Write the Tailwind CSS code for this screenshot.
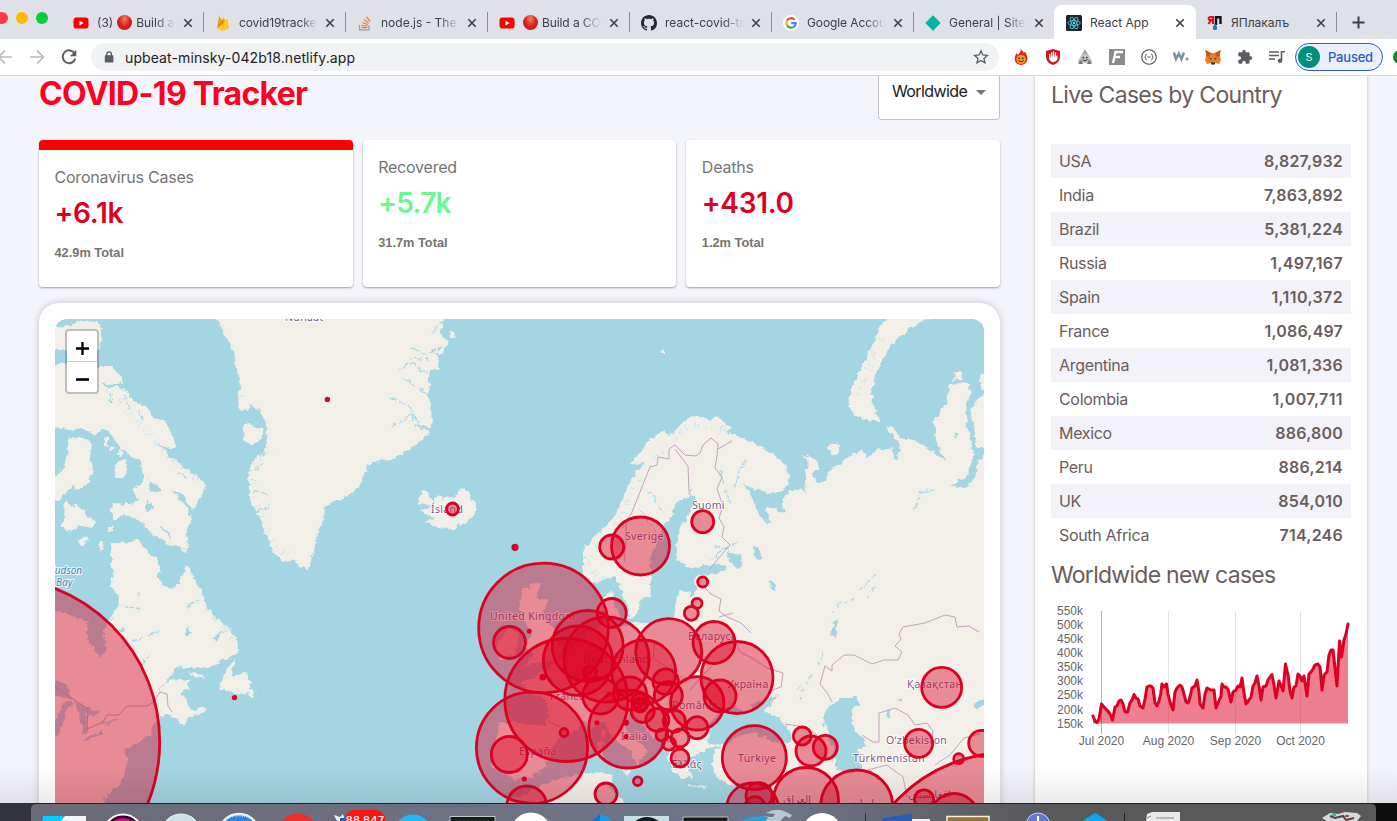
<!DOCTYPE html>
<html lang="en">
<head>
<meta charset="utf-8">
<title>React App</title>
<script src="https://cdn.jsdelivr.net/npm/@tailwindcss/browser@4"></script>
</head>
<body class="overflow-hidden">
<svg class="absolute size-0" aria-hidden="true">
  <defs>
    <symbol id="x" viewBox="0 0 10 10"><path d="M1.3 1.3l7.4 7.4M8.7 1.3L1.3 8.7" stroke="#3c4043" stroke-width="1.6" fill="none"/></symbol>
    <symbol id="yt" viewBox="0 0 16 16"><rect x=".5" y="2.6" width="15" height="11" rx="2.8" fill="#f00"/><path d="M6.5 5.8v4.6l4-2.3z" fill="#fff"/></symbol>
  </defs>
</svg>
<div class="flex h-[821px] w-[1397px] flex-col overflow-hidden bg-[#f4f5fa] font-['Inter',sans-serif]">

  <!-- Tab strip -->
  <div class="relative flex h-[39px] shrink-0 bg-[#dee1e8] text-[12px] tracking-[0px] text-[#3c4043]">
    <div class="flex w-[62px] shrink-0 gap-2 pt-3">
      <i class="-ml-1 size-3 rounded-full bg-[#ff3b4a]"></i><i class="size-3 rounded-full bg-[#ffb900]"></i><i class="size-3 rounded-full bg-[#00d13a]"></i>
    </div>
    <div class="relative flex w-[142px] items-center gap-2 pt-1.5 pr-[11px] pl-[11px]"><svg class="size-4 shrink-0"><use href="#yt"/></svg><div class="flex flex-1 items-center gap-1 overflow-hidden whitespace-nowrap [mask-image:linear-gradient(90deg,#000_75%,transparent)]"><span>(3)</span><i class="size-[15px] shrink-0 rounded-full bg-radial-[at_50%_25%] from-[#f08070] via-[#dc2018] to-[#b01010]"></i><span>Build a</span></div><svg class="size-2.5 shrink-0"><use href="#x"/></svg><i class="absolute top-3 right-0 h-5 w-px bg-[#8a8d91]"></i></div>
    <div class="relative flex w-[142px] items-center gap-2 pt-1.5 pr-[11px] pl-[11px]"><svg class="size-4 shrink-0" viewBox="0 0 16 16"><path d="M2 13L4.3.8 7 5.2 8.600 2.600 14 13l-5.800 3z" fill="#ffa000"/><path d="M2 13l10.500-9.500L14 13l-5.800 3z" fill="#ffca28"/><path d="M2 13L7 5l2 3z" fill="#f57c00"/></svg><div class="flex-1 overflow-hidden whitespace-nowrap tracking-[-0.1px] [mask-image:linear-gradient(90deg,#000_80%,transparent)]">covid19tracker</div><svg class="size-2.5 shrink-0"><use href="#x"/></svg><i class="absolute top-3 right-0 h-5 w-px bg-[#8a8d91]"></i></div>
    <div class="relative flex w-[142px] items-center gap-2 pt-1.5 pr-[11px] pl-[11px]"><svg class="size-4 shrink-0" viewBox="0 0 16 16" fill="none"><path d="M2.500 10v4.800h9.500V10" stroke="#9a9c9f" stroke-width="1.200"/><path d="M4.300 12.700h6M4.400 10.300l6 .8M5.200 7.500l5.600 2M7 4.500l4.700 3.700M9.600 1.800l3.500 4.900" stroke="#f48024" stroke-width="1.300"/></svg><div class="flex-1 overflow-hidden whitespace-nowrap [mask-image:linear-gradient(90deg,#000_75%,transparent)]">node.js - The</div><svg class="size-2.5 shrink-0"><use href="#x"/></svg><i class="absolute top-3 right-0 h-5 w-px bg-[#8a8d91]"></i></div>
    <div class="relative flex w-[142px] items-center gap-2 pt-1.5 pr-[11px] pl-[11px]"><svg class="size-4 shrink-0"><use href="#yt"/></svg><div class="flex flex-1 items-center gap-1 overflow-hidden whitespace-nowrap tracking-[-0.1px] [mask-image:linear-gradient(90deg,#000_75%,transparent)]"><i class="size-[15px] shrink-0 rounded-full bg-radial-[at_50%_25%] from-[#f08070] via-[#dc2018] to-[#b01010]"></i><span>Build a COVID</span></div><svg class="size-2.5 shrink-0"><use href="#x"/></svg><i class="absolute top-3 right-0 h-5 w-px bg-[#8a8d91]"></i></div>
    <div class="relative flex w-[142px] items-center gap-2 pt-1.5 pr-[11px] pl-[11px]"><svg class="size-4 shrink-0" viewBox="0 0 16 16"><path fill="#24292e" d="M8 0C3.580 0 0 3.580 0 8c0 3.540 2.290 6.530 5.470 7.590.4.070.55-.17.55-.38 0-.19-.01-.82-.01-1.490-2.010.37-2.530-.49-2.690-.94-.09-.23-.48-.94-.82-1.130-.28-.15-.68-.52-.01-.53.63-.01 1.080.58 1.230.82.72 1.210 1.870.87 2.330.66.07-.52.28-.87.51-1.070-1.780-.2-3.640-.89-3.640-3.950 0-.87.31-1.590.82-2.150-.08-.2-.36-1.020.08-2.120 0 0 .67-.21 2.200.82.64-.18 1.320-.27 2-.27s1.360.09 2 .27c1.530-1.040 2.200-.82 2.200-.82.44 1.100.16 1.920.08 2.120.51.56.82 1.270.82 2.150 0 3.070-1.870 3.750-3.650 3.950.29.25.54.73.54 1.480 0 1.070-.01 1.930-.01 2.200 0 .21.15.46.55.38A8.010 8.010 0 0 0 16 8c0-4.420-3.580-8-8-8z"/></svg><div class="flex-1 overflow-hidden whitespace-nowrap [mask-image:linear-gradient(90deg,#000_75%,transparent)]">react-covid-tra</div><svg class="size-2.5 shrink-0"><use href="#x"/></svg><i class="absolute top-3 right-0 h-5 w-px bg-[#8a8d91]"></i></div>
    <div class="relative flex w-[142px] items-center gap-2 pt-1.5 pr-[11px] pl-[11px]"><svg class="size-4 shrink-0" viewBox="0 0 16 16" fill="none"><circle cx="8" cy="8" r="8" fill="#fff"/><g stroke-width="2.200"><path d="M11.500 4.700A4.700 4.700 0 0 0 3.900 5.800" stroke="#ea4335"/><path d="M3.900 5.800a4.700 4.700 0 0 0 0 4.500" stroke="#fbbc05"/><path d="M3.900 10.300a4.700 4.700 0 0 0 7.200 1.200" stroke="#34a853"/><path d="M11.100 11.500a4.500 4.500 0 0 0 1.600-3.300H8.200" stroke="#4285f4"/></g></svg><div class="flex-1 overflow-hidden whitespace-nowrap tracking-[-0.1px] [mask-image:linear-gradient(90deg,#000_75%,transparent)]">Google Account</div><svg class="size-2.5 shrink-0"><use href="#x"/></svg><i class="absolute top-3 right-0 h-5 w-px bg-[#8a8d91]"></i></div>
    <div class="relative flex w-[140px] items-center gap-2 pt-1.5 pr-[10px] pl-[11px]"><svg class="size-4 shrink-0" viewBox="0 0 16 16"><path d="M8 .3L15.700 8 8 15.700.3 8z" fill="#00b5a3"/></svg><div class="flex-1 overflow-hidden whitespace-nowrap [mask-image:linear-gradient(90deg,#000_75%,transparent)]">General | Site s</div><svg class="size-2.5 shrink-0"><use href="#x"/></svg></div>
    <div class="relative flex w-[142px] items-center gap-2 rounded-t-lg bg-white pr-[11px] pl-[12px] pt-1.5 [clip-path:inset(5px_0_0_0_round_8px_8px_0_0)]"><svg class="size-4 shrink-0" viewBox="0 0 16 16" fill="none"><rect width="16" height="16" rx="1.500" fill="#20232a"/><g stroke="#4cc3de" stroke-width=".9"><ellipse cx="8" cy="8" rx="6.300" ry="2.400"/><ellipse cx="8" cy="8" rx="6.300" ry="2.400" transform="rotate(60 8 8)"/><ellipse cx="8" cy="8" rx="6.300" ry="2.400" transform="rotate(120 8 8)"/></g><circle cx="8" cy="8" r="1.200" fill="#61dafb"/></svg><div class="flex-1 whitespace-nowrap">React App</div><svg class="size-2.5 shrink-0"><use href="#x"/></svg></div>
    <div class="relative flex w-[141px] items-center gap-2 pt-1.5 pr-[11px] pl-[11px]"><svg class="size-4 shrink-0" viewBox="0 0 16 16" fill="none"><path d="M6 1v8M6 2H3.300a1.500 1.500 0 0 0 0 3.200H6M3.800 5.500L1.500 9" stroke="#e8101c" stroke-width="2.200"/><path d="M9 10V2.200h4.500V9" stroke="#15151a" stroke-width="2.400"/><path d="M8 8.500c1.500 2.300 2.200 3.200 2.200 4.400a2.200 2.200 0 0 1-4.400 0c0-1.200.8-2.200 2.200-4.400z" fill="#2277b5"/></svg><div class="flex-1 whitespace-nowrap">ЯПлакалъ</div><svg class="size-2.5 shrink-0"><use href="#x"/></svg><i class="absolute top-3 right-0 h-5 w-px bg-[#8a8d91]"></i></div>
    <svg class="mt-4 ml-[15px] size-[13px]" viewBox="0 0 13 13"><path d="M6.500.5v12M.5 6.500h12" stroke="#3c4043" stroke-width="2"/></svg>
  </div>

  <!-- Toolbar -->
  <div class="flex h-[37px] shrink-0 items-center border-b border-[#d5d7dd] bg-white">
    <div class="flex w-[91px] shrink-0 items-center">
      <svg class="-ml-[3px] h-4 w-[17px]" viewBox="0 0 17 16" fill="none" stroke="#b9bbbe" stroke-width="1.700"><path d="M15 8H2M8 1.500L1.500 8 8 14.500"/></svg>
      <svg class="ml-4 h-4 w-[15px]" viewBox="0 0 15 16" fill="none" stroke="#b9bbbe" stroke-width="1.700"><path d="M0 8h13M7 1.500L13.500 8 7 14.500"/></svg>
      <svg class="ml-4 size-4" viewBox="0 0 16 16" fill="none"><path d="M13.800 4.800A6.400 6.400 0 1 0 14.300 9.500" stroke="#5a5d61" stroke-width="2"/><path d="M15.300.8v6.400H8.900z" fill="#5a5d61"/></svg>
    </div>
    <div class="flex h-7 w-[908px] shrink-0 items-center rounded-full bg-[#f1f2f4] pr-[10px] pl-[13px]">
      <svg class="h-3 w-[10px]" viewBox="0 0 10 12"><rect x=".8" y="4.200" width="8.600" height="7.300" rx=".8" fill="#5a5d61"/><path d="M2.800 5V3.200a2.300 2.300 0 0 1 4.600 0V5" fill="none" stroke="#5a5d61" stroke-width="1.300"/></svg>
      <span class="ml-[11px] flex-1 text-[14px] tracking-[0.1px] text-[#202124]">upbeat-minsky-042b18.netlify.app</span>
      <svg class="size-4" viewBox="0 0 16 16"><path d="M8 1.800l1.800 4.200 4.600.4-3.500 3 1.100 4.500L8 11.500l-4 2.400 1.100-4.500-3.500-3L6.200 6z" fill="none" stroke="#5a5d61" stroke-width="1.300"/></svg>
    </div>
    <div class="ml-[14px] flex w-[273px] shrink-0 items-center gap-4">
      <svg class="size-4 shrink-0" viewBox="0 0 16 16"><path d="M8 0c1 2 2 2 3 4l1-1.500c1.500 3 2.800 5 2.300 8A6.200 6.200 0 0 1 8 16a6.200 6.200 0 0 1-6.300-5.500C1.500 8 2.700 6.500 3.200 4l1.600 2C6.500 4.500 7.500 2.500 8 0z" fill="#e8261c"/><circle cx="8" cy="10.500" r="4.600" fill="#f3a01f"/><circle cx="6.200" cy="9.300" r=".9" fill="#40200a"/><circle cx="9.800" cy="9.300" r=".9" fill="#40200a"/><path d="M5.300 11.500q2.700 2.800 5.400 0" stroke="#40200a" fill="none"/></svg>
      <svg class="size-4 shrink-0" viewBox="0 0 16 16"><path d="M8 0l7 2v6q-.5 6-7 8-6.500-2-7-8V2z" fill="#d9131c"/><path d="M4.800 5.500v4M6.700 9V3.600M8.600 8V3M10.500 8V3.800" stroke="#fff" stroke-width="1.300" stroke-linecap="round" fill="none"/><path d="M4.200 7.500h7l1.300-1.500v4q-1 3-4 3.300-3.500-.3-4.300-3.300z" fill="#fff"/></svg>
      <svg class="size-4 shrink-0" viewBox="0 0 16 16"><path d="M8 0l3.500 6L15.500 14l-3.500-1.500h-8L.5 14l4-8z" fill="#a5a5a5"/><circle cx="8" cy="9.500" r="4.800" fill="#c4c4c4"/><path d="M1 15l3.500-4 1.500 4zM15 15l-3.500-4-1.500 4z" fill="#777"/><circle cx="6.300" cy="8.600" r=".9" fill="#333"/><circle cx="9.700" cy="8.600" r=".9" fill="#333"/><path d="M5.500 10.700q2.500 2.400 5 0" stroke="#333" fill="none"/></svg>
      <svg class="size-4 shrink-0" viewBox="0 0 16 16"><rect width="16" height="16" fill="#8b8b8b"/><path d="M4 14L6.500 3H14M5.500 8H11" stroke="#fff" stroke-width="2.300" fill="none"/></svg>
      <svg class="size-4 shrink-0" viewBox="0 0 16 16" fill="none" stroke="#4c4c4c"><circle cx="8" cy="8" r="7.300" stroke-width="1.100"/><path d="M5.800 5c-1.500 0-.8 3-2 3 1.200 0 .5 3 2 3M10.200 5c1.500 0 .8 3 2 3-1.200 0-.5 3-2 3M6.500 8h3" stroke-width="1"/></svg>
      <svg class="size-4 shrink-0" viewBox="0 0 16 16"><path d="M.8 3.500l2.200 6.500 2.800-5.500L8.400 10 11 3.500" fill="none" stroke="#7b909b" stroke-width="2.500"/><circle cx="14" cy="10" r="1.500" fill="#7b909b"/></svg>
      <svg class="size-4 shrink-0" viewBox="0 0 16 16"><path d="M.5 1l5.500 3h4l5.500-3-.7 6L16 11l-2 4-3.500-1-1 1.500h-3L5.500 14 2 15 0 11l1.200-4z" fill="#e8821e"/><path d="M.5 1l5.500 3-1.500 4L1.200 7zM15.500 1L10 4l1.500 4 3.300-1z" fill="#c95a16"/><path d="M4 8.500l3 1-1 1.200zM12 8.500l-3 1 1 1.200z" fill="#26364a"/><path d="M6 13.500h4l-.5 2h-3z" fill="#3a2a22"/></svg>
      <svg class="size-4 shrink-0" viewBox="0 0 24 24"><path fill="#5a5d61" d="M20.500 11H19V7c0-1.100-.9-2-2-2h-4V3.500a2.500 2.500 0 0 0-5 0V5H4c-1.100 0-2 .9-2 2v3.800h1.500a2.700 2.700 0 0 1 0 5.400H2V20c0 1.100.9 2 2 2h3.800v-1.500a2.700 2.700 0 0 1 5.400 0V22H17c1.100 0 2-.9 2-2v-4h1.500a2.500 2.500 0 0 0 0-5z"/></svg>
      <svg class="size-4 shrink-0" viewBox="0 0 16 16"><path d="M0 3h10M0 6.500h10M0 10h6M12.500 12V2.700H16" stroke="#5a5d61" stroke-width="1.600" fill="none"/><circle cx="11" cy="11.800" r="2.200" fill="#5a5d61"/></svg>
    </div>
    <div class="ml-[9px] flex h-7 w-[88px] shrink-0 items-center rounded-full border border-[#2a5bd0] bg-[#e9f0fc] pl-[2px]">
      <span class="flex size-[22px] items-center justify-center rounded-full bg-[#038f7a] text-[11px] text-white">S</span>
      <span class="ml-2 pt-px text-[13px] font-medium tracking-[-0.2px] text-[#2a5bd0]">Paused</span>
    </div>
    <i class="ml-[10px] size-3.5 shrink-0 rounded-full bg-[#0b8a28]"></i>
  </div>

  <!-- Page -->
  <div class="relative flex h-[727px] shrink-0 overflow-hidden pl-[39px]">
    <div class="flex w-[961px] shrink-0 flex-col">
      <div class="flex h-16 shrink-0 items-start justify-between">
        <h1 class="-mt-px text-[32px] leading-[38px] font-bold tracking-[-0.7px] text-[#ff0022]">COVID-19 Tracker</h1>
        <div class="flex h-11 w-[122px] items-start border border-t-0 rounded-b border-[#c1c1c3] bg-white pt-[4px] pl-[13px] text-[16px] leading-[22px] tracking-[-0.6px] text-[#202020]"><span class="w-[84px]">Worldwide</span><i class="mt-[10px] border-x-5 border-t-5 border-x-transparent border-t-[#757575]"></i></div>
      </div>
      <div class="grid h-[147px] shrink-0 grid-cols-3 gap-[10px] text-[#757575]">
        <div class="rounded border-t-10 border-[#ff0000] bg-white pt-[15px] pl-[15.500px] shadow-[0_1px_2px_rgba(0,0,0,.35)]"><p class="text-[16px] leading-6 tracking-[-0.22px]">Coronavirus Cases</p><p class="mt-[7px] text-[28px] leading-[34px] font-semibold tracking-[-0.3px] text-[#dc0022]">+6.1k</p><p class="mt-[13px] font-['Liberation_Sans',sans-serif] text-[12.800px] leading-5 font-bold">42.9m Total</p></div>
        <div class="rounded bg-white pt-[15px] pl-[15.500px] shadow-[0_1px_2px_rgba(0,0,0,.35)]"><p class="text-[16px] leading-6 tracking-[-0.22px]">Recovered</p><p class="mt-[7px] text-[28px] leading-[34px] font-semibold tracking-[-0.7px] text-[#69fa8e]">+5.7k</p><p class="mt-[13px] font-['Liberation_Sans',sans-serif] text-[12.800px] leading-5 font-bold">31.7m Total</p></div>
        <div class="rounded bg-white pt-[15px] pl-[15.500px] shadow-[0_1px_2px_rgba(0,0,0,.35)]"><p class="text-[16px] leading-6 tracking-[-0.22px]">Deaths</p><p class="mt-[7px] text-[28px] leading-[34px] font-semibold tracking-[-0.3px] text-[#dc0022]">+431.0</p><p class="mt-[13px] font-['Liberation_Sans',sans-serif] text-[12.800px] leading-5 font-bold">1.2m Total</p></div>
      </div>
      <div class="relative mt-4 h-[560px] shrink-0 rounded-[20px] bg-white p-4 shadow-[0_0_8px_-1px_rgba(0,0,0,.25)]">
        <svg class="block h-[484px] w-[929px] rounded-t-[12px]" viewBox="55 319 929 484">
          <defs>
            <filter id="coast" filterUnits="userSpaceOnUse" x="40" y="300" width="960" height="520"><feTurbulence type="fractalNoise" baseFrequency=".16" numOctaves="3" seed="4"/><feDisplacementMap in="SourceGraphic" scale="7" xChannelSelector="R" yChannelSelector="G"/></filter>
          </defs>
          <rect x="55" y="319" width="929" height="484" fill="#a3d5e2"/>
          <g filter="url(#coast)">
            <g fill="#f2efe9">
              <path d="M214 312L221 330 228 339 233 352 236 368 240 383 238 398 239 408 246 411 251 405 258 409 265 420 268 430 266 445 264 455 256 457 251 462 248 478 250 498 258 515 265 532 272 548 283 562 295 560 300 566 309 570 313 552 316 537 324 520 325 508 332 502 345 498 356 490 364 478 366 468 372 462 390 460 407 451 420 442 430 431 418 427 432 427 431 405 427 396 430 392 429 380 430 371 438 371 440 358 434 352 443 352 448 343 440 334 443 325 445 312Z"/>
              <path d="M246 422l8 4 10 4-1 6-4 5-8 4-7-6-1-9zM449 331l6 1 1 7-6 0z"/>
              <path d="M417 502L423 490 428 492 433 501 438 494 443 500 447 495 453 498 458 494 463 488 466 492 471 492 470 499 477 503 477 510 470 519 461 525 450 529 436 527 426 522 433 518 420 511 432 506Z"/>
              <path d="M50 327L63 328 75 323 85 320 98 321 102 328 102 340 98 350 50 350Z"/>
              <path d="M50 366L65 363 90 366 110 366 118 372 122 382 112 385 100 382 108 388 118 386 128 391 133 400 142 405 150 410 152 418 165 422 172 435 176 446 165 448 168 456 180 464 190 472 200 478 206 486 200 497 194 510 187 503 180 492 172 490 180 500 187 508 191 520 187 530 188 542 187 553 176 545 164 527 160 526 168 535 180 549 170 545 158 538 148 530 140 520 128 515 115 519 110 510 115 503 130 505 138 500 132 492 142 482 144 475 140 462 128 455 118 445 110 432 105 428 95 435 85 430 70 430 50 428Z"/>
              <path d="M69 437L85 438 92 445 90 455 93 475 88 482 80 490 72 486 66 492 60 500 50 502 50 482 62 470 67 455Z"/>
              <path d="M65 500L72 505 82 508 90 518 97 523 92 528 80 526 70 532 60 526 64 518ZM77 541l10-5 2 4-9 5zM99 543l3 0 1 5-3 3zM116 463q6-5 11-1l1 9q-4 8-10 7-5-3-3-10zM110 445l4 1-2 5-4 0zM104 437l5 0-2 9-5 0zM119 450l3 1-1 5-4-2zM108 528l6 0-1 3-5 0z"/>
              <path d="M111 543L130 542 137 541 145 548 152 556 159 560 159 580 165 586 172 590 180 580 187 565 193 575 200 590 206 605 214 615 228 628 237 638 238 652 228 658 215 665 200 668 175 668 172 675 162 685 155 696 165 682 180 678 188 680 188 690 180 694 186 697 188 707 195 710 208 708 200 714 188 718 183 725 178 718 165 715 155 722 150 735 143 740 135 745 125 748 128 765 120 785 110 792 103 803 103 815 45 815 45 608 60 612 80 618 87 622 88 640 100 658 107 650 103 630 110 621 118 608 119 597 110 585 113 575 111 560Z"/>
              <path d="M237 657L232 670 233 676 245 673 250 680 250 689 255 693 252 698 248 692 238 696 230 690 218 690 222 680 227 668ZM188 671l14 4 2 4-9-2z"/>
              <path d="M523 590L530 586 543 583 535 597 548 600 542 615 550 625 558 640 562 652 555 660 535 663 520 668 535 655 525 645 532 635 525 622 520 605ZM497 642l13-15 9 7-3 20-16 6z"/>
              <path d="M583 550L590 541 600 532 612 520 620 505 628 485 638 470 645 462 630 465 640 453 650 440 663 431 670 436 680 425 690 418 700 415 710 420 718 416 731 428 724 432 740 437 758 445 775 455 787 467 790 482 783 490 770 494 755 490 742 483 750 492 755 505 758 515 770 524 766 508 775 508 783 514 785 508 781 500 790 492 797 488 806 493 805 480 808 460 800 455 815 459 820 470 812 472 815 482 826 482 828 472 838 465 850 456 863 450 868 458 878 450 892 448 895 460 901 450 898 440 889 429 900 438 915 440 930 450 945 462 940 450 936 440 935 420 945 405 949 385 968 383 970 395 965 410 968 430 974 452 968 475 958 482 950 486 965 488 975 478 978 460 990 452 990 815 768 815 774 790 768 783 757 786 745 783 730 785 718 778 712 765 714 752 722 746 708 748 700 753 692 757 687 765 692 778 680 778 672 770 668 755 662 745 652 735 640 722 630 712 624 720 628 733 640 743 650 754 641 757 637 769 632 752 622 745 612 735 605 722 592 727 583 722 575 730 560 738 549 752 545 765 535 775 515 780 505 772 493 768 493 752 496 735 500 722 515 723 545 726 549 716 546 700 530 692 520 682 535 677 550 668 565 655 575 645 590 632 602 625 600 607 604 596 612 590 614 605 622 618 631 617 628 606 622 595 615 576 606 577 598 584 588 581 583 570Z"/>
              <path d="M990 395L971 408 974 425 976 448 990 448ZM990 375L982 372 979 380 984 392 972 404 990 402ZM890 312L876 333 870 350 863 365 855 380 850 395 848 405 855 415 865 420 882 423 875 410 871 395 875 375 885 355 898 338 912 327 935 315ZM829 445q6-5 11 1-2 8-8 9-4-3-3-10zM888 427l4 0 8 9-4 2-7-6zM955 373l6 0 3 6-10 1zM661 350l3 0 0 3-3 0z"/>
              <path d="M498 815L510 797 525 795 548 782 570 775 600 773 613 775 610 790 622 800 625 815ZM618 769l14 0-3 7zM597 742l6 0 0 15-6 0zM602 730l3 0 0 9-3 0zM690 784l16 2-1 2-15-2z"/>
            </g>
            <g fill="#a3d5e2">
              <path d="M684 498L696 497 694 504 688 515 680 528 676 545 677 560 690 568 715 565 728 567 718 573 700 575 694 582 697 590 690 600 690 590 680 592 676 603 674 617 660 622 640 622 625 626 615 627 614 617 630 620 638 613 640 600 650 595 652 575 650 560 656 545 662 530 672 515 675 505Z"/>
              <path d="M709 727L718 712 735 705 745 712 755 708 750 703 765 700 778 694 772 703 765 712 780 718 790 732 791 742 782 744 765 738 752 733 738 736 725 745 710 744Z"/>
              <path d="M822 717L830 706 843 697 858 697 858 704 850 712 852 720 855 733 865 738 866 745 858 750 862 770 850 773 835 768 835 757 828 735Z"/>
              <path d="M728 552l11 3 3 6-4 8-9-8zM752 544l6 3 4 12-6 0zM973 706l9-7 2 0 0 6-7 6zM887 710l3-1 0 8-3 0zM896 700l7-2-2 4zM769 580l6 5 3 6-8-3zM833 620l5-1-3 19-4-3zM797 690l5-6-4 7z"/>
              <path d="M50 679l15 6 9 15-12-3-12-2zM60 707q6-7 16-4l-9 6q-4 17-10 29l-4-6zM75 702l25 10-6 5-8-5 2 20-4 2zM84 739l18-8 0 3-16 6zM102 724l18-5-4 3-14 3z"/>
              <path d="M188 626l4 8-8 2 0-3zM213 638l12-7-8 9zM118 631l8-3-3 5zM138 592l3 0-2 3z"/>
              <path d="M149 480l6 4 7 6-12 3zM147 500l6 8-7 4zM954 433l3 0 0 5-3-1z"/>
            </g>
            <g fill="none" stroke="#a3d5e2" stroke-width="6" stroke-dasharray=".8 5 .5 9 1 3 .6 7" opacity=".6">
              <path d="M228 345L240 400M262 420L268 455 254 462 253 495 270 540 290 560M318 535l12-30M108 390l60 65 34 28M190 530l-4 20"/>
              <path d="M587 560L620 520 645 465 690 425 730 430M583 560l20 22M204 605l32 35M880 338L856 400"/>
            </g>
            <g fill="none" stroke="#a3d5e2" stroke-width="1.400" opacity=".9">
              <path d="M444 321l-12 10M442 347l-18 7-14-7M431 375l-22-13-11 9M431 397l-20-14-10-6M420 425l-12-20-17-7M412 415l-22 12M428 428l-14-4-4-18M430 360l-20-2M254 470l10-6M254 490l14 4M258 512l12-6M268 430l-12-14M110 392l2 12M124 396l6 14M138 410l6 12M170 450l-12-4M186 478l-8-8M200 600l-14 8M140 610l-18-4M160 630l-30 12M150 655l-14 16M700 510l-10-20M720 470l10 35M745 460l-12 30M648 490l14 20M640 510l16 22M710 560l30-20M715 545l15 5M935 490l-15 2-6 20M860 590l15-15" stroke-dasharray="5 1.500 9 3"/>
              <path d="M800 700l12-26M818 664l6-12M832 612l8-8 14-4M868 598l8-14" stroke-dasharray="3 4 6 3"/>
            </g>
          </g>
          <g fill="none" stroke="#c2a3bd" stroke-width="1">
            <path d="M632 512l18-45 7-2 1-8 11 2v-10l6-4 10 10 11 1 4-3 3-8 8-7 7 6-1 12-2 12 7 9-5 12 6 17-4 12 5 9-2 10 8 8-12 14-8 10M675 449l13 17 1 25 1 4M718 449l14-8M632 512l-6 10v20l-2 20M703 586l8 8 10 5-2 12 8 6 14 6 10 10M719 617l14-4M735 640l5 12 12 6 15 10 16 5-2 14-12 4M785 724l20 3 12 8M832 702l-4-8-8-10 5-18 7 5v-6l12-10h10l18 9 12-4h14l4-8-7-6 6-7-2-5 4-7 22-4 20-8 10 2 2 10 12-1 10 6M862 735l11 7h6v-29l16-5 13 7 7 10 12-2 6 8-1 7M867 770l20-5 16 12 4 20M935 765l15-10 14-17 16-4M560 727l-12-6M655 640l-2 18 30 20M870 770l8 10M690 690l12-14 10-10"/>
            <path d="M55 687l15 10 18 12-1 20 16-7 4-7h12l8-9h20l7-4 6-10 7 2 1 12 4 6"/>
          </g>
          <g font-family="'Noto Sans', sans-serif" font-size="10.500" fill="#7c5c88" stroke="#fff" stroke-opacity=".75" stroke-width="2" paint-order="stroke" letter-spacing=".35">
            <text x="285" y="320.500">Nunaat</text><text x="431" y="513">Ísland</text><text x="692" y="509">Suomi</text><text x="625" y="540">Sverige</text><text x="490" y="620">United Kingdom</text><text x="583" y="663">Deutschland</text><text x="550" y="700">France</text><text x="519" y="755">España</text><text x="621" y="740">Italia</text><text x="688" y="640">Беларусь</text><text x="727" y="688">Україна</text><text x="672" y="709">România</text><text x="672" y="768">Ελλάς</text><text x="738" y="762">Türkiye</text><text x="907" y="688">Қазақстан</text><text x="886" y="744">Oʻzbekiston</text><text x="853" y="762">Türkmenistan</text><text x="783" y="803" font-family="'DejaVu Sans', sans-serif" letter-spacing="0">العراق</text><text x="908" y="798" font-family="'DejaVu Sans', sans-serif" letter-spacing="0">افغانستان</text><text x="852" y="807" font-family="'DejaVu Sans', sans-serif" letter-spacing="0">ایران</text>
            <g fill="#4f84ae" font-style="italic" font-size="10" letter-spacing="0"><text x="48" y="574">Hudson</text><text x="56" y="586">Bay</text></g>
          </g>
          <g fill="#dc0022" fill-opacity=".42" stroke="#dc0022" stroke-width="2.800">
            <circle cx="-5.300" cy="742" r="165"/><circle cx="1009" cy="908" r="155.500"/><circle cx="543.500" cy="628" r="64.800"/><circle cx="509.500" cy="642.500" r="16"/><circle cx="611.700" cy="613" r="14.500"/><circle cx="587.700" cy="646" r="35.500"/><circle cx="606.500" cy="659.500" r="42.700"/><circle cx="578" cy="660.700" r="34.700"/><circle cx="566.300" cy="700" r="61.500"/><circle cx="532" cy="747.800" r="55.600"/><circle cx="509.300" cy="754.500" r="18"/><circle cx="590" cy="672.700" r="6.500"/><circle cx="600.700" cy="696" r="18"/><circle cx="627.700" cy="729" r="39"/><circle cx="643.700" cy="672" r="32"/><circle cx="668.700" cy="651.700" r="33"/><circle cx="630" cy="693.500" r="16.500"/><circle cx="665.700" cy="681.700" r="12.700"/><circle cx="668.300" cy="695.700" r="14"/><circle cx="640" cy="701.700" r="8.500"/><circle cx="640" cy="705" r="7"/><circle cx="642.700" cy="711" r="11.500"/><circle cx="657.300" cy="720" r="11.500"/><circle cx="674.300" cy="721" r="11"/><circle cx="697.300" cy="703.300" r="26.700"/><circle cx="697" cy="727.700" r="11"/><circle cx="680" cy="738" r="9"/><circle cx="669" cy="743.700" r="6.500"/><circle cx="662" cy="735" r="6"/><circle cx="680" cy="758" r="9"/><circle cx="637.700" cy="781.200" r="4.300"/><circle cx="606" cy="794" r="11"/><circle cx="526.700" cy="806" r="20"/><circle cx="714" cy="642.500" r="21"/><circle cx="737" cy="677.500" r="36"/><circle cx="720" cy="696" r="16"/><circle cx="702.700" cy="582" r="5"/><circle cx="697" cy="603.300" r="5"/><circle cx="691.300" cy="613.300" r="7"/><circle cx="564" cy="732.500" r="4"/><circle cx="611.700" cy="547" r="12"/><circle cx="640.500" cy="546" r="29"/><circle cx="702.700" cy="521.700" r="11"/><circle cx="452.500" cy="509" r="6"/><circle cx="754.300" cy="757.700" r="32"/><circle cx="802.300" cy="736" r="9"/><circle cx="811" cy="751" r="15"/><circle cx="825.300" cy="747.300" r="12"/><circle cx="806" cy="800" r="32.500"/><circle cx="856.700" cy="806" r="36"/><circle cx="752.500" cy="809" r="26"/><circle cx="759" cy="795.700" r="13"/><circle cx="755" cy="806.700" r="10"/><circle cx="941.700" cy="687.300" r="20"/><circle cx="918.700" cy="743.300" r="14"/><circle cx="981.700" cy="743.300" r="13"/><circle cx="958.700" cy="758.700" r="5"/><circle cx="924" cy="799.300" r="9.500"/><circle cx="954" cy="818" r="24.500"/>
          </g>
          <g fill="#dc0022"><circle cx="327.400" cy="399.400" r="2.700"/><circle cx="234.500" cy="697.600" r="2.700"/><circle cx="515" cy="547.300" r="3.600"/><circle cx="529.300" cy="631.300" r="2.500"/><circle cx="542.700" cy="677.300" r="3.300"/><circle cx="597" cy="722.700" r="2.500"/><circle cx="609" cy="693.500" r="2"/><circle cx="626" cy="722.700" r="3"/><circle cx="626" cy="736.700" r="2.500"/><circle cx="524.300" cy="779" r="2.500"/></g>
        </svg>
        <div class="absolute top-[26px] left-[26px] flex h-[65px] w-[34px] flex-col rounded border-2 border-black/20 bg-white bg-clip-padding">
          <span class="flex flex-1 items-center justify-center border-b border-[#ccc] pt-[5px]"><svg class="size-[13px]" viewBox="0 0 13 13"><path d="M6.500 0v13M0 6.500h13" stroke="#000" stroke-width="2.300"/></svg></span>
          <span class="flex flex-1 items-center justify-center pt-[5px]"><svg class="size-[13px]" viewBox="0 0 13 13"><path d="M0 6.500h13" stroke="#000" stroke-width="2.600"/></svg></span>
        </div>
      </div>
    </div>

    <!-- Side panel -->
    <div class="ml-[35px] w-[332px] shrink-0 bg-white px-4 text-[#6a5d5d] shadow-[0_0_3px_rgba(0,0,0,.25)]">
      <h3 class="pt-[3px] text-[23px] leading-8 tracking-[-0.68px]">Live Cases by Country</h3>
      <div class="mt-[33px] text-[16px] leading-[34px] tracking-[-0.32px] *:flex *:h-[34px] *:justify-between *:px-2 *:odd:bg-[#f3f2f8]">
        <div><span>USA</span><b class="font-semibold tracking-[0.18px]">8,827,932</b></div>
        <div><span>India</span><b class="font-semibold tracking-[0.18px]">7,863,892</b></div>
        <div><span>Brazil</span><b class="font-semibold tracking-[0.18px]">5,381,224</b></div>
        <div><span>Russia</span><b class="font-semibold tracking-[0.35px]">1,497,167</b></div>
        <div><span>Spain</span><b class="font-semibold tracking-[0.38px]">1,110,372</b></div>
        <div><span>France</span><b class="font-semibold tracking-[0.18px]">1,086,497</b></div>
        <div><span>Argentina</span><b class="font-semibold tracking-[0.25px]">1,081,336</b></div>
        <div><span>Colombia</span><b class="font-semibold tracking-[0.4px]">1,007,711</b></div>
        <div><span>Mexico</span><b class="font-semibold tracking-[0.2px]">886,800</b></div>
        <div><span>Peru</span><b class="font-semibold tracking-[0.25px]">886,214</b></div>
        <div><span>UK</span><b class="font-semibold tracking-[0.25px]">854,010</b></div>
        <div><span>South Africa</span><b class="font-semibold tracking-[0.25px]">714,246</b></div>
      </div>
      <h3 class="pt-[7px] text-[23px] leading-8 tracking-[-0.72px]">Worldwide new cases</h3>
      <svg class="mt-[9px] block h-[160px] w-[300px]" viewBox="1051 600 300 160">
        <g stroke="#e3e3e3"><path d="M1101.500 611v123" stroke="#b5b5b5"/><path d="M1168.500 611v123M1235.500 611v123M1300.500 611v123"/></g>
        <path fill="#dc0022" fill-opacity=".5" d="M1093 716L1095 721 1097 722.500 1099 719 1101.500 704 1104 707 1107 710 1110 714 1112.500 720 1115 707 1117 706 1119 701 1121 700 1123 704 1125 712 1127.500 712 1130 703 1132 700 1134 694.500 1136 698 1138 699 1140 706 1143 708 1145 699 1147 687 1149 686 1151 686 1153 688 1155 703 1157 706 1159 701 1160.500 695 1162 684 1164 687 1166.500 684 1168 694 1170 702 1173 710 1175 692 1177 688 1180 685 1182 687 1184 694 1186 702 1188 703 1190 697 1192 688 1195 686 1197 680 1199 692 1200 704 1203 708 1205 694 1207 688 1211 690 1214 690 1216 708 1218 703 1221 696 1222 684 1224 687 1226 687 1228 689 1231 702 1233 692 1236 690 1238 686 1240 687 1242 678 1244 693 1246 704 1249 700 1251 697 1253 686 1255 683 1257 676 1259 686 1261 700 1263 687 1266 686 1268 680 1270 677 1272 674.500 1274 685 1276 698 1279 681 1282 688 1283 691 1285.500 664 1288 675 1290 691 1292 698 1294 687 1296 686 1298 674 1300 676 1302 681 1304 676 1307 696 1309 674 1311 672 1313 669 1315 665 1318 664 1320 667 1322 690 1324 675 1327 672 1329 655 1331 650 1333 650 1337 686 1339.500 641 1341.500 657 1344 640 1346 634 1348 624V723.500H1093Z"/>
        <path fill="none" stroke="#dc0022" stroke-width="3" stroke-linejoin="round" stroke-linecap="round" d="M1093 716L1095 721 1097 722.500 1099 719 1101.500 704 1104 707 1107 710 1110 714 1112.500 720 1115 707 1117 706 1119 701 1121 700 1123 704 1125 712 1127.500 712 1130 703 1132 700 1134 694.500 1136 698 1138 699 1140 706 1143 708 1145 699 1147 687 1149 686 1151 686 1153 688 1155 703 1157 706 1159 701 1160.500 695 1162 684 1164 687 1166.500 684 1168 694 1170 702 1173 710 1175 692 1177 688 1180 685 1182 687 1184 694 1186 702 1188 703 1190 697 1192 688 1195 686 1197 680 1199 692 1200 704 1203 708 1205 694 1207 688 1211 690 1214 690 1216 708 1218 703 1221 696 1222 684 1224 687 1226 687 1228 689 1231 702 1233 692 1236 690 1238 686 1240 687 1242 678 1244 693 1246 704 1249 700 1251 697 1253 686 1255 683 1257 676 1259 686 1261 700 1263 687 1266 686 1268 680 1270 677 1272 674.500 1274 685 1276 698 1279 681 1282 688 1283 691 1285.500 664 1288 675 1290 691 1292 698 1294 687 1296 686 1298 674 1300 676 1302 681 1304 676 1307 696 1309 674 1311 672 1313 669 1315 665 1318 664 1320 667 1322 690 1324 675 1327 672 1329 655 1331 650 1333 650 1337 686 1339.500 641 1341.500 657 1344 640 1346 634 1348 624"/>
        <g font-family="'Liberation Sans', sans-serif" font-size="12" fill="#666" text-anchor="end"><text x="1083" y="615">550k</text><text x="1083" y="629">500k</text><text x="1083" y="643">450k</text><text x="1083" y="657">400k</text><text x="1083" y="671">350k</text><text x="1083" y="685">300k</text><text x="1083" y="699">250k</text><text x="1083" y="714">200k</text><text x="1083" y="728">150k</text></g>
        <g font-family="'Liberation Sans', sans-serif" font-size="12" fill="#666" text-anchor="middle"><text x="1101.500" y="745">Jul 2020</text><text x="1168.500" y="745">Aug 2020</text><text x="1235.500" y="745">Sep 2020</text><text x="1300.500" y="745">Oct 2020</text></g>
      </svg>
    </div>
    <div class="pointer-events-none absolute inset-x-0 bottom-0 h-9 bg-linear-to-b from-transparent to-black/8"></div>
  </div>

  <!-- Dock -->
  <div class="relative h-[18px] shrink-0 bg-linear-to-r from-[#33343c] via-[#202028] to-[#0d0d0d] pl-[31px]">
    <div class="h-[18px] w-[1345px] rounded-t-[5px] border-t border-[#222] bg-linear-to-r from-[#6b6b77] via-[#70758a] via-55% to-[#595959] to-75%">
      <svg class="block h-[17px] w-[1345px]" viewBox="31 804 1345 17">
        <path d="M43 816h22l-4 5H42z" fill="#00cdfb"/><path d="M65 816h21v5H61z" fill="#f3f5f7"/>
        <circle cx="123" cy="834" r="19.500" fill="#2a0722" stroke="#fff" stroke-width="2"/><circle cx="123" cy="834" r="16" fill="#e0008b"/>
        <circle cx="181" cy="834" r="20" fill="#cfe0e5" stroke="#edf5f6"/><circle cx="239" cy="834" r="20" fill="#2a86e2" stroke="#f0f3f6" stroke-width="2.500"/><path d="M225 819q14-7 28 0" stroke="#d5e7fa" stroke-width="2" stroke-dasharray="1 1.500" fill="none"/>
        <circle cx="298" cy="834" r="20.500" fill="#ee2d2d"/><path d="M334 815l6 2 3-3 2 7h-8z" fill="#e8f0fa"/>
        <path d="M340 818h12v3h-12z" fill="#1760c0"/><rect x="345" y="810" width="40" height="22" rx="9" fill="#ff1414"/><text x="365" y="824" text-anchor="middle" font-family="Inter, sans-serif" font-size="11" font-weight="500" letter-spacing=".2" fill="#fff">88,847</text>
        <circle cx="413" cy="834" r="19.500" fill="#20b8f5"/><path d="M450 816.500h45v8h-45z" fill="#141a1a" stroke="#c5c9c9"/><path d="M455 820h34" stroke="#2b3a33" stroke-dasharray="2 2"/><circle cx="531" cy="833" r="20.500" fill="#fff"/><path d="M600 814l11 5v3h-20z" fill="#0aa1f1"/><path d="M600 814v8h-9z" fill="#0875c8"/>
        <path d="M624 816h45v6h-45z" fill="#c5e0e6"/><path d="M634 822q13-10 26 0z" fill="#15171a"/><path d="M683 817h45v8h-45z" fill="#17191c" stroke="#b8bcc0"/>
        <path d="M756 821q2-6 17-4l2-3-9-1q10-6 20-1l6 3-2 3-5-2-5 5z" fill="#b7cad2"/><path d="M741 821q10-6 27-4l-2 4z" fill="#20a5da"/><circle cx="822" cy="833" r="20" fill="#fff"/><path d="M865.500 813v8" stroke="#30343e"/>
        <path d="M883 818l29-4v7h-30z" fill="#2c5bb8"/><path d="M912 819h18v2h-18z" fill="#f3f3f3"/><path d="M947 816.500h42v6h-42z" fill="#9a7135" stroke="#f5f0e5" stroke-width="1.500"/><circle cx="1038" cy="825" r="12" fill="#6878d0" stroke="#c8d0f2"/><path d="M1038 816v5" stroke="#fff" stroke-width="2"/>
        <path d="M1095 813l13 8h-26z" fill="#05a9f4"/><path d="M1124.500 813v8" stroke="#222"/><path d="M1147 814l5-2h28v9h-34z" fill="#e9e9e9"/><path d="M1151 816l-4 2M1156 818h18" stroke="#888"/><path d="M1322 818l8-5 8 1 7-2 12 1 4 3-4 5h-30z" fill="#d6d8da"/><path d="M1330 816l5 2 8-2 3 4 8-2" stroke="#454b50" stroke-width="2" fill="none"/><path d="M1332 815h4" stroke="#28c48f" stroke-width="2"/><path d="M1345 816h4" stroke="#d33" stroke-width="2"/>
      </svg>
    </div>
  </div>
</div>
</body>
</html>
